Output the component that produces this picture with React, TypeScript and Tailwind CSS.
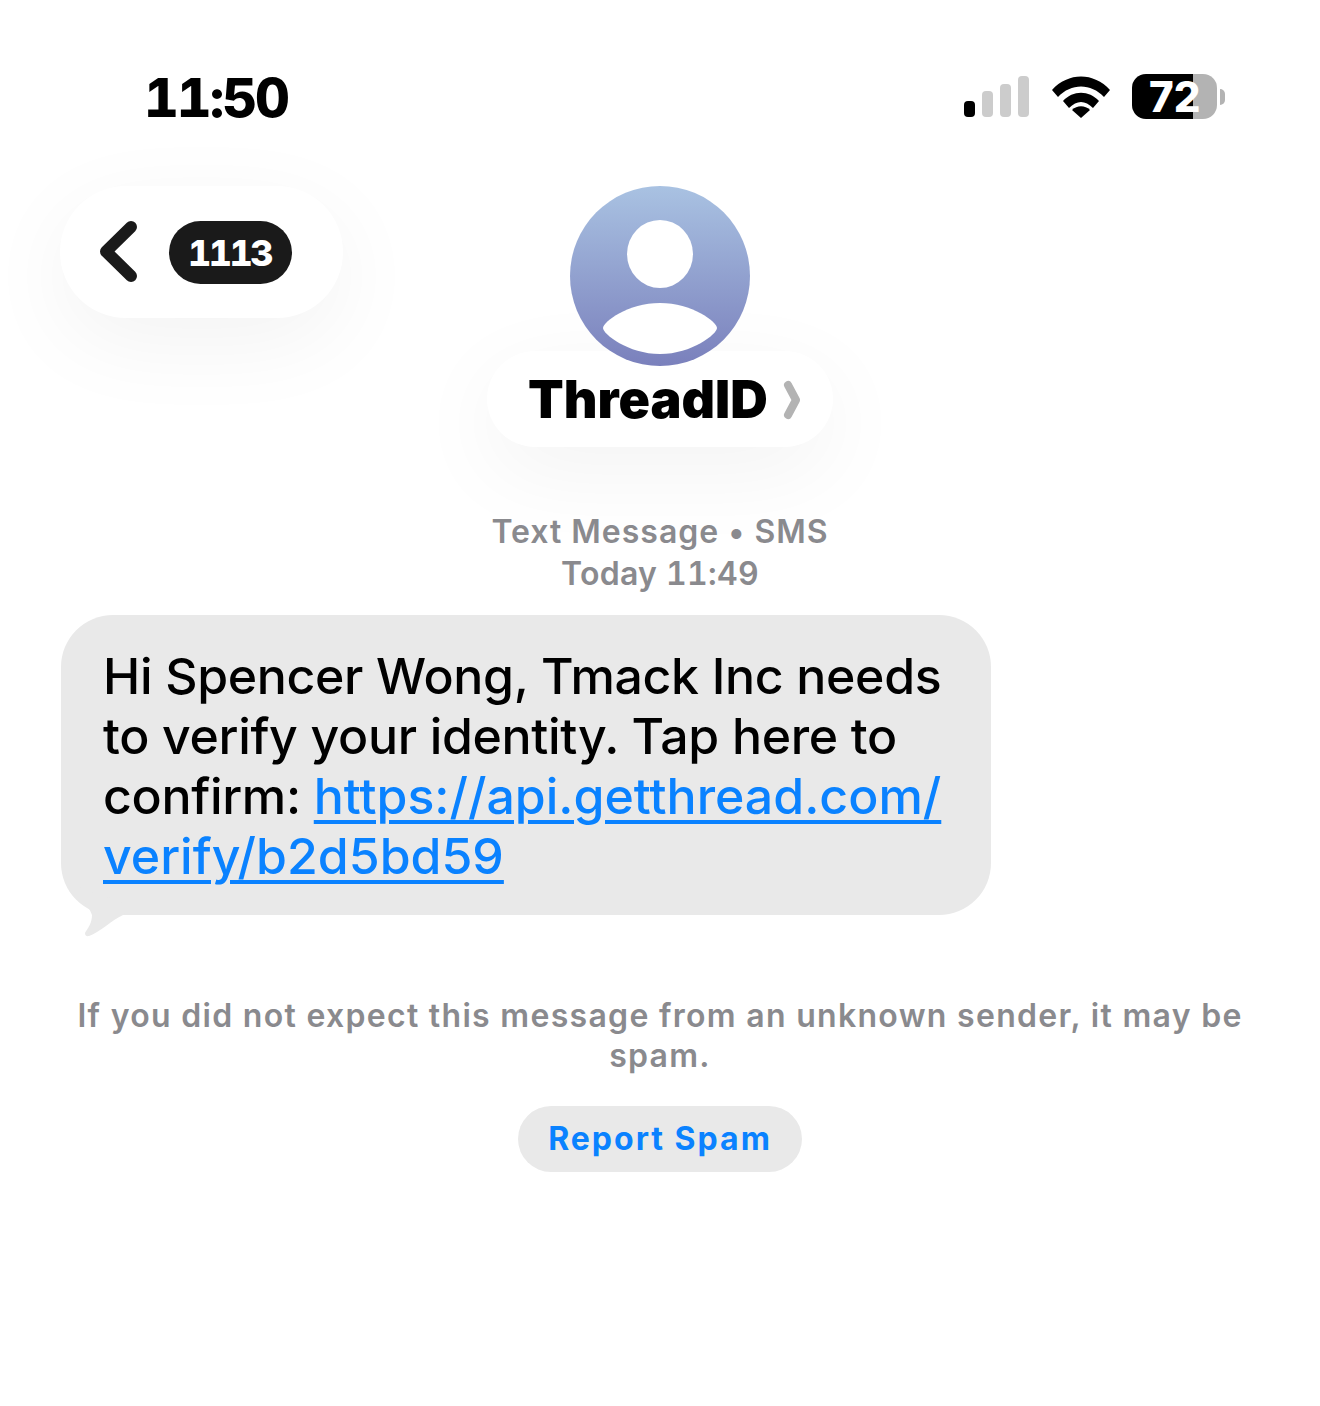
const font = "font-['Inter',sans-serif]";

function Signal() {
  return (
    <svg width="66" height="42" viewBox="0 0 66 42">
      <rect x="0" y="25" width="11" height="16" rx="4" fill="#000" />
      <rect x="18" y="15" width="11" height="26" rx="4" fill="#ccc" />
      <rect x="36" y="8" width="11" height="33" rx="4" fill="#ccc" />
      <rect x="54" y="0" width="11" height="41" rx="4" fill="#ccc" />
    </svg>
  );
}

function Wifi() {
  return (
    <svg width="58" height="42" viewBox="0 0 58 42">
      <path d="M0 14 C16 -4 42 -4 58 14 L52 21 C39 7 19 7 6 21 Z" fill="#000" />
      <path d="M11 25 C21 14 37 14 47 25 L41 32 C33 24 25 24 17 32 Z" fill="#000" />
      <path d="M20 34 C25 29 33 29 38 34 L29 42 Z" fill="#000" />
    </svg>
  );
}

function Battery() {
  return (
    <div className="flex items-center">
      <div className="flex h-[45px] w-[85px] items-center rounded-[14px] bg-[linear-gradient(90deg,#000_61px,#b3b3b3_61px)] pl-[17px] text-[42px] leading-none font-extrabold text-white">
        72
      </div>
      <div className="ml-[3px] h-[16px] w-[5px] rounded-r-full bg-[#b3b3b3]" />
    </div>
  );
}

function Avatar() {
  return (
    <svg width="180" height="180" viewBox="0 0 180 180" className="relative z-10 block">
      <defs>
        <linearGradient id="avatarFill" x1="0" y1="0" x2="0" y2="1">
          <stop offset="0" stopColor="#a9c2e2" />
          <stop offset="1" stopColor="#7a80bc" />
        </linearGradient>
      </defs>
      <circle cx="90" cy="90" r="90" fill="url(#avatarFill)" />
      <ellipse cx="90" cy="68" rx="33" ry="34" fill="#fff" />
      <path d="M33 142 C33 136 58 117 90 117 C122 117 147 136 147 142 C147 148 122 168 90 168 C58 168 33 148 33 142 Z" fill="#fff" />
    </svg>
  );
}

export default function App() {
  return (
    <div className={`${font} h-[1406px] w-[1320px] overflow-hidden bg-white`}>
      {/* status bar */}
      <div className="flex h-[186px] items-start justify-between pt-[66px] pr-[95px] pl-[144px]">
        <div className="pt-[1px] text-[54px] leading-[62px] font-extrabold tracking-[-2px] text-black tabular-nums">11:50</div>
        <div className="flex items-center gap-[22px] pt-[8px]">
          <Signal />
          <Wifi />
          <Battery />
        </div>
      </div>

      {/* header */}
      <div className="grid grid-cols-[1fr_auto_1fr] px-[60px]">
        <div>
          <div className="flex h-[132px] w-[283px] items-center gap-[29px] rounded-[66px] bg-white pl-[40px] shadow-[0_24px_90px_rgba(0,0,0,0.05)]">
            <svg width="40" height="62" viewBox="0 0 40 62">
              <path d="M31 6 L6 30.5 L31 55" fill="none" stroke="#1a1a1a" strokeWidth="12" strokeLinecap="round" strokeLinejoin="round" />
            </svg>
            <div className="flex h-[63px] w-[123px] items-center justify-center rounded-[32px] bg-[#1a1a1a] pt-[2px] pr-[2px] text-[36px] font-extrabold tracking-[-2.5px] text-white tabular-nums">1113</div>
          </div>
        </div>
        <div className="flex flex-col items-center">
          <Avatar />
          <div className="mt-[-15px] flex h-[96px] w-[346px] items-center rounded-[48px] bg-white pt-[2px] pl-[41px] shadow-[0_24px_90px_rgba(0,0,0,0.05)]">
            <span className="text-[52px] leading-none font-black text-black">ThreadID</span>
            <svg width="18" height="40" viewBox="0 0 18 40" className="ml-[15px]">
              <path d="M5 5 L13 20 L5 35" fill="none" stroke="#b3b3b3" strokeWidth="8" strokeLinecap="round" strokeLinejoin="round" />
            </svg>
          </div>
        </div>
        <div />
      </div>

      {/* timestamp */}
      <div className="mt-[64px] text-center text-[32px] leading-[42px] font-semibold tracking-[1px] text-[#8a8a8e]">
        <div>Text Message • SMS</div>
        <div className="tracking-[0.3px] tabular-nums">Today 11:49</div>
      </div>

      {/* message bubble */}
      <div className="relative mt-[20px] ml-[61px] w-[930px] rounded-[52px] bg-[#e9e9e9] px-[42px] pt-[31px] pb-[29px] text-[50px] leading-[60px] font-medium tracking-[-0.33px] text-black">
        <div className="whitespace-nowrap">Hi Spencer Wong, Tmack Inc needs</div>
        <div className="whitespace-nowrap">to verify your identity. Tap here to</div>
        <div className="whitespace-nowrap">
          confirm: <span className="tracking-[0px] text-[#0a82ff] underline decoration-[4px] underline-offset-[6px]">https://api.getthread.com/</span>
        </div>
        <div className="tracking-[0px] text-[#0a82ff] underline decoration-[4px] underline-offset-[6px]">verify/b2d5bd59</div>
        <svg width="70" height="50" viewBox="0 0 70 50" className="absolute top-[272px] left-[15px]">
          <path d="M2 0 L7 13 C10 18 14 22 16 28 C16 36 12 41 9 46 C9 49 11 49.5 13 49 C24 45 36 33 47 28 L60 20 Z" fill="#e9e9e9" />
        </svg>
      </div>

      {/* spam notice */}
      <div className="mt-[81px] text-center text-[32px] leading-[40px] font-semibold tracking-[1.3px] text-[#8a8a8e]">
        <div>If you did not expect this message from an unknown sender, it may be</div>
        <div>spam.</div>
      </div>
      <div className="mt-[30px] flex justify-center">
        <div className="flex h-[66px] w-[284px] items-center justify-center rounded-[33px] bg-[#e9e9e9] text-[32px] font-bold tracking-[2px] text-[#0a82ff]">Report Spam</div>
      </div>
    </div>
  );
}
